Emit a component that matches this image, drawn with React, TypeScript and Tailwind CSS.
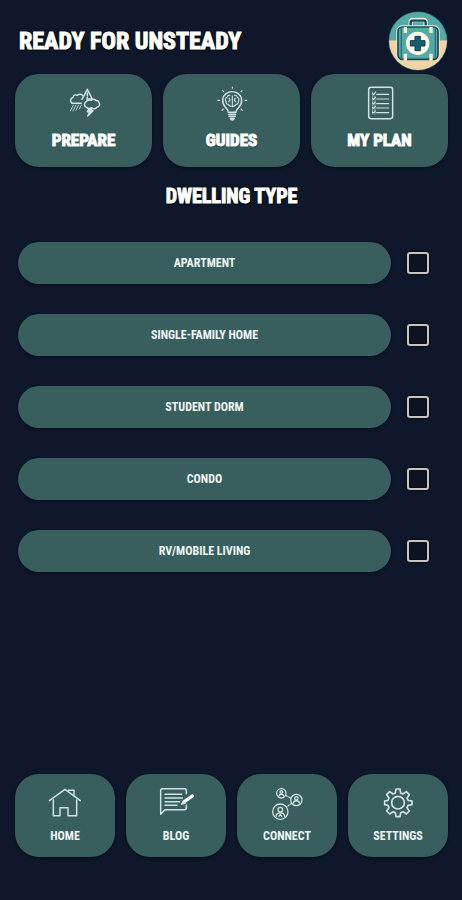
import { ReactNode } from 'react';
import { twJoin } from 'tailwind-merge';

type Tile = {
  id: number;
  label: string;
  path: string;
  icon: ReactNode;
};

const lineProps = {
  fill: 'none',
  stroke: '#d3e2e2',
  strokeWidth: 4.4,
  strokeLinecap: 'round',
  strokeLinejoin: 'round',
} as const;

const StormIcon = () => (
  <svg viewBox="166 46 108 108" className="size-9" aria-hidden="true">
    <g {...lineProps}>
      <path d="M184 98c-6-5-6-15 3-18 1-7 8-9 13-6 5-5 13-4 16 1" />
      <path d="M184 98h28" />
      <path d="M214 86l16-30 15 29h-17" />
      <path d="M230 67v8M230 80v1" />
      <path d="M225 94c-5 4-5 13 2 16 5 4 11 4 15 1 5 5 13 4 16-1 8-1 11-9 7-14 0-5-5-7-9-6-3-5-10-6-14-1-6-2-12-1-17 5z" />
      <path d="M235 115l-5 8h8l-7 13 16-16h-8l6-7" fill="#d3e2e2" />
      <path
        d="M188 103l-9 18M196 103l-9 18M204 103l-8 16M212 103l-6 12"
        strokeWidth="2.6"
      />
    </g>
  </svg>
);

const BulbIcon = () => (
  <svg viewBox="160 46 108 108" className="size-9" aria-hidden="true">
    <g {...lineProps}>
      <path d="M203 125c0-8-5-11-10-17-11-13-8-31 3-39 11-8 26-8 37 0 11 8 14 26 3 39-5 6-10 9-10 17z" />
      <path d="M204 131h21M205 137h19M209 143c3 7 9 7 12 0z" />
      <path
        d="M215 76v32M208 74c-6-1-9 3-9 6-5 2-6 8-3 12-1 6 3 9 7 9 2 5 5 6 8 6M221 74c6-1 9 3 9 6 5 2 6 8 3 12 1 6-3 9-7 9-2 5-5 6-8 6M205 82l3 6-4 6M224 82l-3 6 4 6"
        strokeWidth="3.4"
      />
      <path
        d="M215 49v4M186 60l3 3M244 60l-3 3M171 89h6M253 89h5M184 119l4-4M245 119l-4-4"
        strokeWidth="3.4"
      />
    </g>
  </svg>
);

const ChecklistIcon = () => (
  <svg viewBox="170 46 108 108" className="size-9" aria-hidden="true">
    <g {...lineProps}>
      <rect x="190" y="50" width="72" height="94" rx="7" />
      <path
        d="M214 71h36M214 85h36M214 99h36M214 112h36M214 126h36"
        strokeWidth="3.6"
      />
      <path
        d="M202 69l3 3 6-8M202 83l3 3 5-6M202 97l3 3 5-6M202 110l3 3 5-6M202 124l3 3 5-6"
        strokeWidth="3.4"
      />
      <path d="M202 64v66M209 76v54" strokeWidth="1.8" />
    </g>
  </svg>
);

const HouseIcon = () => (
  <svg viewBox="113 69 108 96" className="h-8 w-9" aria-hidden="true">
    <g {...lineProps}>
      <path d="M120 107l47-34 46 34" />
      <path d="M132 105v47h20v-24h24v24h26v-47" />
      <path d="M177 76h17v17" />
    </g>
  </svg>
);

const BlogIcon = () => (
  <svg viewBox="444 69 108 96" className="h-8 w-9" aria-hidden="true">
    <g {...lineProps}>
      <path d="M529 86v-9c0-4-2-6-6-6h-65c-4 0-6 2-6 6v71l13-14h58c4 0 6-2 6-6v-8" />
      <path d="M465 88h50M465 99h52M465 110h44M465 121h36" />
      <path d="M523 110l24-17" strokeWidth="10" stroke="#fff" />
      <path d="M515 117l5-7 5 5z" fill="#d3e2e2" />
    </g>
  </svg>
);

const ConnectIcon = () => (
  <svg viewBox="117 67 108 96" className="h-8 w-9" aria-hidden="true">
    <g {...lineProps} strokeWidth="3.8">
      <circle cx="154" cy="83" r="14" />
      <circle cx="199" cy="103" r="17" />
      <circle cx="151" cy="138" r="23" />
      <path d="M168 90l14 7M185 113l-16 11" strokeDasharray="4 5" />
      <circle cx="154" cy="79" r="4" />
      <path d="M147 91c1-7 13-7 14 0" />
      <circle cx="199" cy="98" r="5" />
      <path d="M190 112c1-9 17-9 18 0" />
      <circle cx="151" cy="132" r="7" />
      <path d="M138 152c1-14 25-14 26 0M147 152l4-6 4 6" />
    </g>
  </svg>
);

const GearIcon = () => (
  <svg viewBox="450 67 108 96" className="h-8 w-9" aria-hidden="true">
    <g {...lineProps} strokeWidth="5">
      <path d="M498 70h12l2 12 7 3 10-7 9 9-7 10 3 7 12 2v11l-12 2-3 7 7 10-9 9-10-7-7 3-2 12h-12l-2-12-7-3-10 7-9-9 7-10-3-7-10-2v-11l10-2 3-7-7-10 9-9 10 7 7-3z" />
      <circle cx="504" cy="111" r="19" />
    </g>
  </svg>
);

const Logo = () => (
  <svg
    viewBox="26 30 180 180"
    className="size-15 shrink-0"
    role="img"
    aria-label="First aid kit"
  >
    <clipPath id="logo-clip">
      <circle cx="116" cy="120" r="87" />
    </clipPath>
    <circle cx="116" cy="120" r="89" fill="#164e5c" />
    <g clipPath="url(#logo-clip)">
      <path d="M26 30h180v88H26z" fill="#55aaa6" />
      <path d="M26 118h180v92H26z" fill="#f2d3a6" />
    </g>
    <path
      d="M94 78V64q0-7 7-7h31q7 0 7 7v14"
      fill="none"
      stroke="#efe8d0"
      strokeWidth="13"
    />
    <path
      d="M94 78V65q0-6 6-6h33q6 0 6 6v13"
      fill="none"
      stroke="#154957"
      strokeWidth="7"
    />
    <rect x="51" y="73" width="130" height="105" rx="16" fill="#f6ead0" />
    <rect
      x="56"
      y="78"
      width="120"
      height="97"
      rx="13"
      fill="#55aaa6"
      stroke="#154957"
      strokeWidth="5"
    />
    <path d="M66 82v89M168 82v89" stroke="#26707a" strokeWidth="4" />
    <path
      d="M78 78v18M155 78v18M78 158v21M155 158v21"
      stroke="#f6ead0"
      strokeWidth="10"
    />
    <circle cx="115" cy="127" r="35" fill="#fff8e8" />
    <path
      d="M107 106h16v13h14v16h-14v14h-16v-14H93v-16h14z"
      fill="#17606a"
      stroke="#103b4c"
      strokeWidth="3"
    />
  </svg>
);

const topTiles: Tile[] = [
  { id: 1, label: 'PREPARE', path: '#prepare', icon: <StormIcon /> },
  { id: 2, label: 'GUIDES', path: '#guides', icon: <BulbIcon /> },
  { id: 3, label: 'MY PLAN', path: '#my-plan', icon: <ChecklistIcon /> },
];

const bottomTiles: Tile[] = [
  { id: 1, label: 'HOME', path: '#home', icon: <HouseIcon /> },
  { id: 2, label: 'BLOG', path: '#blog', icon: <BlogIcon /> },
  { id: 3, label: 'CONNECT', path: '#connect', icon: <ConnectIcon /> },
  { id: 4, label: 'SETTINGS', path: '#settings', icon: <GearIcon /> },
];

const dwellings = [
  { id: 'apartment', name: 'APARTMENT' },
  { id: 'single-family', name: 'SINGLE-FAMILY HOME' },
  { id: 'dorm', name: 'STUDENT DORM' },
  { id: 'condo', name: 'CONDO' },
  { id: 'rv', name: 'RV/MOBILE LIVING' },
];

const TileLink = ({ tile, small }: { tile: Tile; small?: boolean }) => (
  <a
    href={tile.path}
    className={twJoin(
      'flex flex-1 flex-col items-center rounded-3xl bg-[#385f5d] shadow-[0_1px_3px_#060c1c]',
      small ? 'gap-1.5 pt-3.5 pb-[11px]' : 'gap-2 pt-3 pb-[17px]',
    )}
  >
    {tile.icon}
    <span
      className={twJoin(
        'whitespace-nowrap',
        small
          ? 'text-xs leading-5 text-[#eef5f4]'
          : 'text-[17px] leading-5 text-white [-webkit-text-stroke:1px_#fff] [text-shadow:0_1px_1px_#0b2327]',
      )}
    >
      {tile.label}
    </span>
  </a>
);

const App = () => {
  return (
    <div className="flex min-h-screen flex-col bg-[#0f172a] pt-[11px] pr-[14px] pb-[43px] pl-[15px] font-['Roboto_Condensed','Liberation_Sans_Narrow','Liberation_Sans',sans-serif] font-bold text-white">
      <header className="flex items-center justify-between pl-1">
        <h1 className="text-2xl [-webkit-text-stroke:1px_#fff] [text-shadow:0_0_2px_#000,0_1px_2px_#000]">
          READY FOR UNSTEADY
        </h1>
        <Logo />
      </header>

      <nav className="mt-[3px] flex gap-[11px]">
        {topTiles.map(tile => (
          <TileLink key={tile.id} tile={tile} />
        ))}
      </nav>

      <main className="pb-8">
        <h2 className="mt-[15px] text-center text-xl leading-7 [-webkit-text-stroke:1px_#fff] [text-shadow:0_0_2px_#000,0_1px_2px_#000]">
          DWELLING TYPE
        </h2>
        <ul className="mt-8 flex flex-col gap-[30px] pr-[19px] pl-[3px]">
          {dwellings.map(item => (
            <li key={item.id} className="flex items-center gap-4">
              <label
                htmlFor={item.id}
                className="flex h-[42px] flex-1 items-center justify-center rounded-full bg-[#385f5d] text-xs text-[#eef5f4] shadow-[0_1px_3px_#060c1c]"
              >
                {item.name}
              </label>
              <input
                id={item.id}
                type="checkbox"
                className="size-[22px] appearance-none rounded-[3px] border-2 border-[#c9c6c2] bg-[#0d1322] shadow-[0_0_2px_#000,inset_0_0_2px_#000] checked:bg-[#c9c6c2]"
              />
            </li>
          ))}
        </ul>
      </main>

      <nav className="mt-auto flex gap-[11px]">
        {bottomTiles.map(tile => (
          <TileLink key={tile.id} tile={tile} small />
        ))}
      </nav>
    </div>
  );
};

export default App;
